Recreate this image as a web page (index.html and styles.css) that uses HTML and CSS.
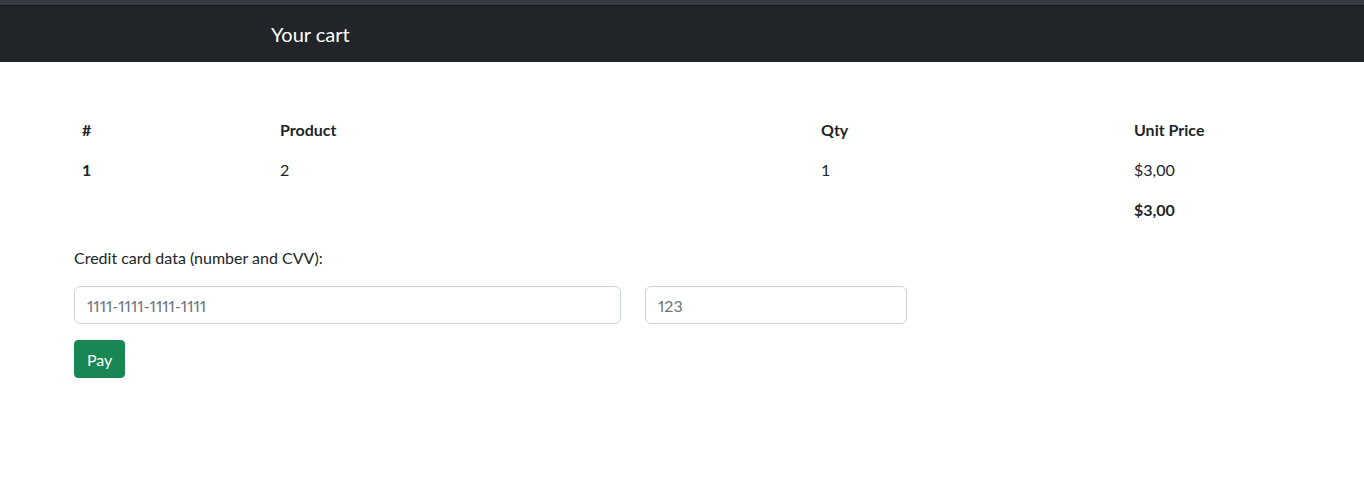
FILE: index.html
```html
<!DOCTYPE html>
<html>

<head>
    <title>Your cart</title>
    <link rel="stylesheet" href="styles.css">
</head>

<body>
    <div class="topstrip"></div>
    <nav class="navbar">
        <span class="brand">Your cart</span>
    </nav>

    <main class="content">
        <table class="cart">
            <thead>
                <tr>
                    <th class="c-num">#</th>
                    <th class="c-prod">Product</th>
                    <th class="c-qty">Qty</th>
                    <th class="c-price">Unit Price</th>
                </tr>
            </thead>
            <tbody>
                <tr>
                    <th>1</th>
                    <td>2</td>
                    <td>1</td>
                    <td>$3,00</td>
                </tr>
                <tr>
                    <td></td>
                    <td></td>
                    <td></td>
                    <th>$3,00</th>
                </tr>
            </tbody>
        </table>

        <form class="payform" onsubmit="return false">
            <label class="cc-label">Credit card data (number and CVV):</label>
            <div class="cc-row">
                <input class="field field-number" type="text" placeholder="1111-1111-1111-1111">
                <input class="field field-cvv" type="text" placeholder="123">
            </div>
            <button class="btn-pay" type="submit">Pay</button>
        </form>
    </main>
</body>

</html>
```

FILE: styles.css
```css
body {
    margin: 0;
    font-family: Lato, "Liberation Sans", sans-serif;
    font-size: 16px;
    line-height: 24px;
    color: #212529;
    background: #fff;
}

.topstrip {
    height: 5px;
    background-color: #363a42;
    border-bottom: 1px solid #16181b;
}

.navbar {
    display: flex;
    align-items: center;
    height: 56px;
    padding-left: 271px;
    background-color: #212529;
}

.brand {
    color: #fff;
    font-size: 20px;
    line-height: 30px;
}

.content {
    padding: 48px 74px 0 74px;
}

.cart {
    width: 1216px;
    border-collapse: collapse;
    margin-bottom: 16px;
}

.cart th,
.cart td {
    padding: 8px;
    height: 24px;
    text-align: left;
    vertical-align: top;
}

.cart th {
    font-weight: bold;
}

.c-num {
    width: 182px;
}

.c-prod {
    width: 525px;
}

.c-qty {
    width: 297px;
}

.cc-label {
    display: block;
    margin-bottom: 16px;
}

.cc-row {
    display: flex;
    gap: 24px;
    margin-bottom: 16px;
}

.field {
    box-sizing: border-box;
    height: 38px;
    padding: 6px 12px;
    font-family: Lato, "Liberation Sans", sans-serif;
    font-size: 16px;
    font-variant-numeric: proportional-nums;
    color: #212529;
    border: 1px solid #ced4da;
    border-radius: 6px;
    outline: none;
}

.field::placeholder {
    color: #6c757d;
}

.field-number {
    width: 547px;
}

.field-cvv {
    width: 262px;
}

.btn-pay {
    height: 38px;
    padding: 6px 12px;
    font-family: Lato, "Liberation Sans", sans-serif;
    font-size: 16px;
    color: #fff;
    background-color: #198754;
    border: 1px solid #198754;
    border-radius: 4px;
    cursor: pointer;
}
```
